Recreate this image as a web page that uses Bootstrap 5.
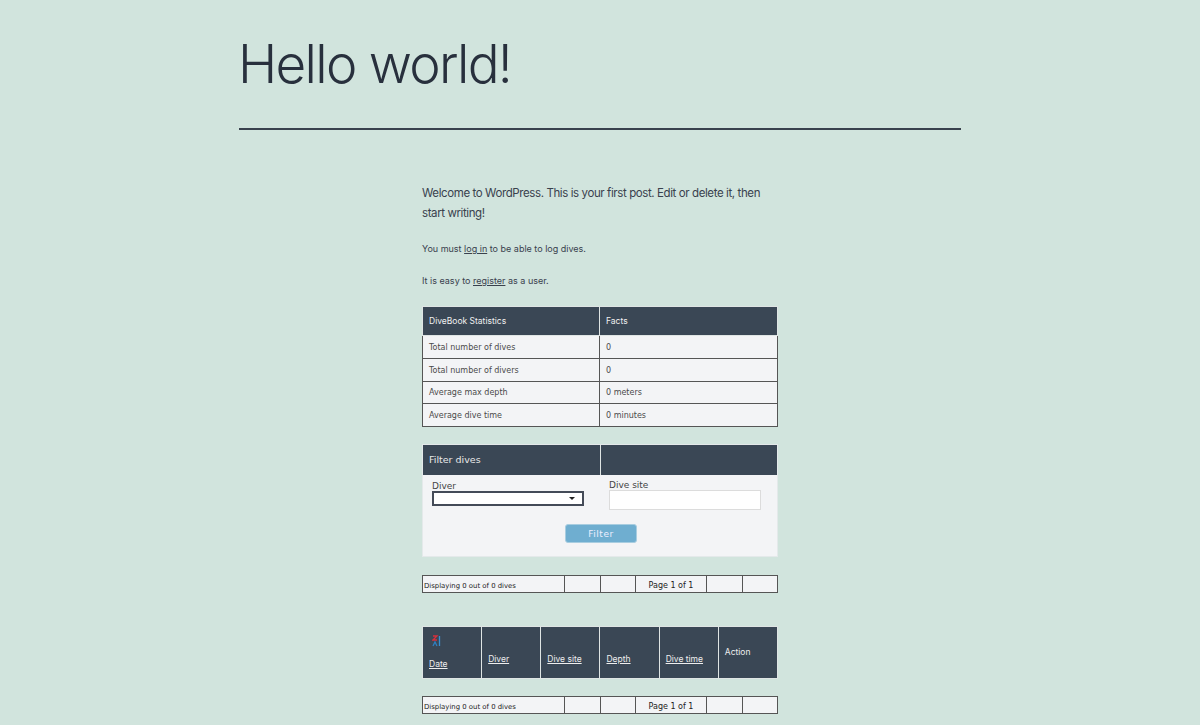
<!doctype html>
<html lang="en">
<head>
<meta charset="utf-8">
<title>Hello world!</title>
<link href="https://cdn.jsdelivr.net/npm/bootstrap@5.3.0/dist/css/bootstrap.min.css" rel="stylesheet">
<style>
body{background:#d1e4dd;color:#28303d;font-family:Inter,sans-serif;overflow:hidden}
.page-wrap{width:722px;margin:0 auto}
.post-title{font-family:Inter,sans-serif;font-weight:300;font-size:53px;line-height:67px;margin:31px 0 30px -1px;letter-spacing:-1.7px;color:#28303d}
.title-rule{border-top:2px solid #39414d;height:0;margin:0 0 53px}
.post-body{width:356px;margin-left:183px}
.intro{font-size:9px;line-height:20px;margin:0 0 12px;color:#39414d}
.intro-big{font-size:11.5px;letter-spacing:-.4px;line-height:20px;margin:0 0 16px;color:#39414d}
.intro-last{margin-bottom:15px}
.intro a{color:#39414d}
.dt{width:356px;border-collapse:collapse;table-layout:fixed;font-family:"DejaVu Sans",sans-serif;color:#4a4a4a}
.stats{font-size:8px;margin-bottom:17px}
.stats th{background:#3a4755;color:#f0f0f0;font-family:Inter,sans-serif;font-weight:400;font-size:8.5px;height:29px;padding:0 6px;border:1px solid #dfe5e4}
.stats td{background:#f3f4f6;height:22.75px;padding:2px 6px 0;border:1px solid #555}
.stats th:first-child,.stats td:first-child{width:177px}
.filter-box{width:356px;height:113px;background:#f3f4f6;border:1px solid #e4e9ea;margin-bottom:18px}
.filter-head{background:#3a4755;height:30px;display:flex;color:#e9e9e9;font-family:"DejaVu Sans",sans-serif;font-size:9.5px;align-items:stretch}
.filter-head>div{width:177px;padding:0 6px;display:flex;align-items:center}
.filter-head>div+div{border-left:1px solid #dfe5e4;width:auto;flex:1}
.filter-fields{display:flex;padding:6px 9px 0;font-family:"DejaVu Sans",sans-serif;font-size:9px;color:#444;line-height:10px}
.filter-fields>div{width:177px;flex:none}
.filter-fields>div+div{margin-top:-1px}
.sel-mock{width:152px;height:15px;border:2px solid #444b58;background:#fff;position:relative}
.sel-mock::after{content:"";position:absolute;right:7px;top:4px;border:3.5px solid transparent;border-top-color:#222;border-bottom:0}
.inp-mock{width:152px;height:20px;border:1px solid #dcdcdc;background:#fff}
.filter-go{display:block;width:72px;height:19px;margin:14px 0 0 142px;padding:0;background:#6faed0;color:#eef;border:1px solid #a8cde0;border-radius:3px;font-family:"DejaVu Sans",sans-serif;font-size:9px;line-height:16px;letter-spacing:.5px}
.pager{font-size:8px;color:#222;background:#f3f4f6;margin-bottom:33px}
.pager td{border:1px solid #555;height:17px;padding:4px 1px 0;text-align:center;line-height:10px}
.pager td:first-child{text-align:left;width:142px;font-size:6.9px}
.pager td:nth-child(2){width:36px}.pager td:nth-child(3){width:35px}.pager td:nth-child(4){width:71px}.pager td:nth-child(5){width:36px}
.dives{font-family:Inter,sans-serif;font-size:8.5px;margin-bottom:17px}
.dives th{background:#3a4755;color:#eee;font-weight:400;height:52px;padding:13px 6px 0;border:1px solid #dfe5e4;vertical-align:middle}
.dives th:first-child{padding-top:0}
.dives a{color:#eee}
.dives svg{display:block;margin:0 0 11px 3px}
.dives th.act{padding-top:0}
.pager-last{margin-bottom:0}
</style>
</head>
<body>
<div class="page-wrap">
  <h1 class="post-title">Hello world!</h1>
  <div class="title-rule"></div>
  <div class="post-body">
    <p class="intro-big">Welcome to WordPress. This is your first post. Edit or delete it, then start writing!</p>
    <p class="intro">You must <a href="#">log in</a> to be able to log dives.</p>
    <p class="intro intro-last">It is easy to <a href="#">register</a> as a user.</p>
    <table class="dt stats">
      <tr><th>DiveBook Statistics</th><th>Facts</th></tr>
      <tr><td>Total number of dives</td><td>0</td></tr>
      <tr><td>Total number of divers</td><td>0</td></tr>
      <tr><td>Average max depth</td><td>0 meters</td></tr>
      <tr><td>Average dive time</td><td>0 minutes</td></tr>
    </table>
    <div class="filter-box">
      <div class="filter-head"><div>Filter dives</div><div></div></div>
      <div class="filter-fields">
        <div><div>Diver</div><div class="sel-mock"></div></div>
        <div><div>Dive site</div><div class="inp-mock"></div></div>
      </div>
      <button class="filter-go" type="button">Filter</button>
    </div>
    <table class="dt pager">
      <tr><td>Displaying 0 out of 0 dives</td><td></td><td></td><td>Page 1 of 1</td><td></td><td></td></tr>
    </table>
    <table class="dt dives">
      <tr>
        <th><svg width="9" height="12" viewBox="0 0 9 12"><path d="M1 1h4L1 5h4" fill="none" stroke="#d8303c" stroke-width="1.3"/><path d="M1 11l2-4 2 4" fill="none" stroke="#2f7fc1" stroke-width="1.3"/><path d="M7.5 1v10" stroke="#3a8fd0" stroke-width="1.3"/></svg><a href="#">Date</a></th>
        <th><a href="#">Diver</a></th>
        <th><a href="#">Dive site</a></th>
        <th><a href="#">Depth</a></th>
        <th><a href="#">Dive time</a></th>
        <th class="act">Action</th>
      </tr>
    </table>
    <table class="dt pager pager-last">
      <tr><td>Displaying 0 out of 0 dives</td><td></td><td></td><td>Page 1 of 1</td><td></td><td></td></tr>
    </table>
  </div>
</div>
</body>
</html>
